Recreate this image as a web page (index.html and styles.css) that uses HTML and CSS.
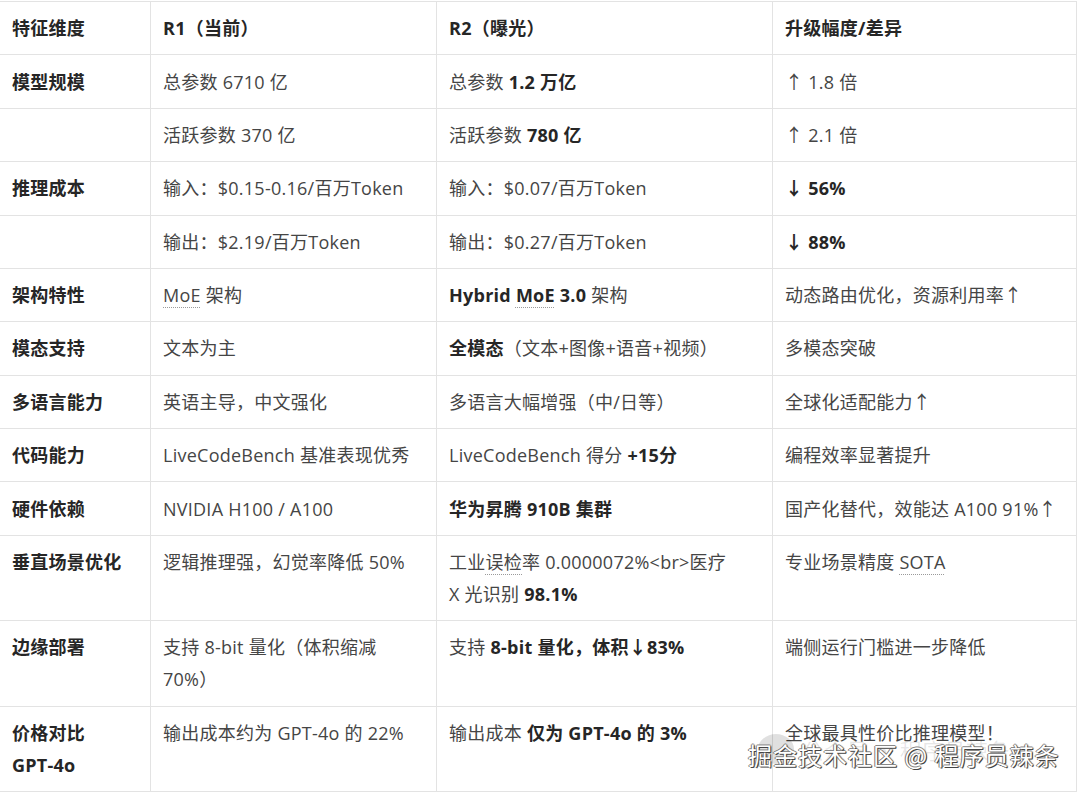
FILE: index.html
```html
<!DOCTYPE html>
<html lang="zh-CN">
<head>
<meta charset="utf-8">
<title>R1 vs R2</title>
<link rel="stylesheet" href="styles.css">
</head>
<body>
<div class="page">
<table class="cmp">
  <colgroup>
    <col class="c1"><col class="c2"><col class="c3"><col class="c4">
  </colgroup>
  <thead>
    <tr><th>特征维度</th><th>R1（当前）</th><th>R2（曝光）</th><th>升级幅度/差异</th></tr>
  </thead>
  <tbody>
    <tr><td class="k">模型规模</td><td>总参数 6710 亿</td><td>总参数 <b>1.2 万亿</b></td><td>↑ 1.8 倍</td></tr>
    <tr><td class="k"></td><td>活跃参数 370 亿</td><td>活跃参数 <b>780 亿</b></td><td>↑ 2.1 倍</td></tr>
    <tr><td class="k">推理成本</td><td>输入：$0.15-0.16/百万Token</td><td>输入：$0.07/百万Token</td><td><b>↓ 56%</b></td></tr>
    <tr><td class="k"></td><td>输出：$2.19/百万Token</td><td>输出：$0.27/百万Token</td><td><b>↓ 88%</b></td></tr>
    <tr><td class="k">架构特性</td><td><span class="dot">MoE</span> 架构</td><td><b>Hybrid <span class="dot">MoE</span> 3.0</b> 架构</td><td>动态路由优化，资源利用率↑</td></tr>
    <tr><td class="k">模态支持</td><td>文本为主</td><td><b>全模态</b>（文本+图像+语音+视频）</td><td>多模态突破</td></tr>
    <tr><td class="k">多语言能力</td><td>英语主导，中文强化</td><td>多语言大幅增强（中/日等）</td><td>全球化适配能力↑</td></tr>
    <tr><td class="k">代码能力</td><td>LiveCodeBench 基准表现优秀</td><td>LiveCodeBench 得分 <b>+15分</b></td><td>编程效率显著提升</td></tr>
    <tr><td class="k">硬件依赖</td><td>NVIDIA H100 / A100</td><td><b>华为昇腾 910B 集群</b></td><td>国产化替代，效能达 A100 91%↑</td></tr>
    <tr><td class="k">垂直场景优化</td><td>逻辑推理强，幻觉率降低 50%</td><td>工业<span class="dot">误检</span>率 0.0000072%&lt;br&gt;医疗<br>X 光识别 <b>98.1%</b></td><td>专业场景精度 <span class="dot">SOTA</span></td></tr>
    <tr><td class="k">边缘部署</td><td>支持 8-bit 量化（体积缩减<br>70%）</td><td>支持 <b>8-bit 量化，体积↓83%</b></td><td>端侧运行门槛进一步降低</td></tr>
    <tr><td class="k">价格对比<br>GPT-4o</td><td>输出成本约为 GPT-4o 的 22%</td><td>输出成本 <b>仅为 GPT-4o 的 3%</b></td><td>全球最具性价比推理模型！</td></tr>
  </tbody>
</table>
<div class="wm-faint"><span class="wx"></span>公众号 · 程序员辣条</div>
<div class="wm">掘金技术社区 @ 程序员辣条</div>
</div>
</body>
</html>
```

FILE: styles.css
```css
html, body {
  margin: 0;
  padding: 0;
  background: #ffffff;
}

.page {
  position: relative;
  width: 1080px;
  height: 793px;
  overflow: hidden;
  padding-top: 1px;
  box-sizing: border-box;
}

.cmp {
  border-collapse: collapse;
  table-layout: fixed;
  width: 1077px;
  margin-left: -1px;
  font-family: "Open Sans", "Noto Sans CJK SC", sans-serif;
  font-size: 18px;
  line-height: 32px;
  letter-spacing: 0.25px;
  color: #454545;
}

.c1 { width: 151px; }
.c2 { width: 286px; }
.c3 { width: 336px; }
.c4 { width: 304px; }

.cmp th,
.cmp td {
  border: 1px solid #e3e3e3;
  padding: 10.2px 12px;
  text-align: left;
  vertical-align: top;
}

.cmp th {
  font-weight: 700;
  color: #262626;
}

.cmp td.k {
  font-weight: 700;
  color: #262626;
}

.cmp b {
  font-weight: 700;
  color: #262626;
}

.dot {
  text-decoration: underline dotted #9a9a9a;
  text-underline-offset: 5px;
  text-decoration-thickness: 1px;
}

.wm {
  position: absolute;
  left: 748px;
  top: 738px;
  font-family: "Noto Sans CJK SC", sans-serif;
  font-size: 24px;
  line-height: 34px;
  color: #ffffff;
  letter-spacing: 1px;
  text-shadow: 1px 1px 0 #444, -1px 0 0 #777, 0 -1px 0 #888, 1px 0 1px #555;
  white-space: nowrap;
}

.wm-faint {
  position: absolute;
  left: 758px;
  top: 734px;
  font-family: "Noto Sans CJK SC", sans-serif;
  font-size: 22px;
  line-height: 30px;
  color: rgba(0, 0, 0, 0.10);
  white-space: nowrap;
  display: flex;
  align-items: center;
  gap: 8px;
}

.wx {
  display: inline-block;
  width: 36px;
  height: 30px;
  border-radius: 50%;
  background: rgba(0, 0, 0, 0.12);
}
```
